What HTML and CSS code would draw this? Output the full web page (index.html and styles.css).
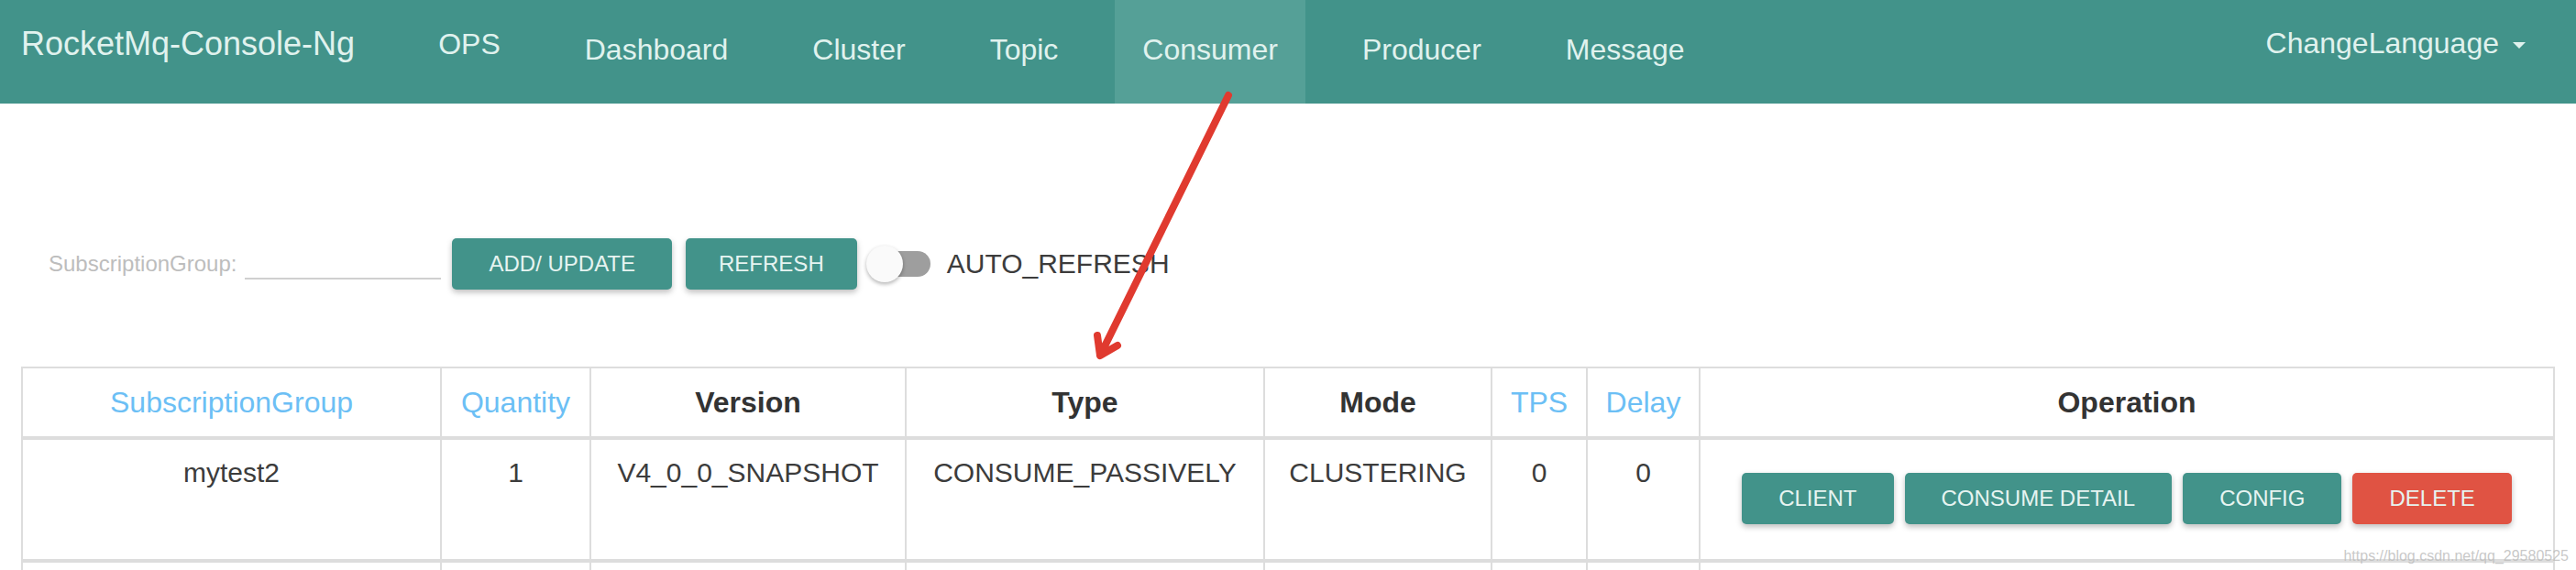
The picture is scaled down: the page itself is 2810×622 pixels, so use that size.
FILE: index.html
```html
<!DOCTYPE html>
<html lang="en">
<head>
  <meta charset="UTF-8">
  <title>RocketMq-Console-Ng</title>
  <link rel="stylesheet" href="styles.css">
</head>
<body>
  <nav class="navbar">
    <a class="brand" href="#">RocketMq-Console-Ng</a>
    <ul class="nav">
      <li><a class="nav-ops" href="#">OPS</a></li>
      <li><a href="#">Dashboard</a></li>
      <li><a href="#">Cluster</a></li>
      <li><a href="#">Topic</a></li>
      <li class="active"><a href="#">Consumer</a></li>
      <li><a href="#">Producer</a></li>
      <li><a href="#">Message</a></li>
    </ul>
    <div class="lang">ChangeLanguage <span class="caret"></span></div>
  </nav>

  <div class="content">
    <div class="search">
      <label>SubscriptionGroup:</label>
      <input type="text">
      <button class="btn">Add/ Update</button>
      <button class="btn">Refresh</button>
      <div class="switch"><span class="track"></span><span class="knob"></span></div>
      <span class="switch-label">AUTO_REFRESH</span>
    </div>

    <table class="grid">
      <colgroup>
        <col style="width:457px"><col style="width:163px"><col style="width:344px"><col style="width:391px">
        <col style="width:248px"><col style="width:104px"><col style="width:123px"><col style="width:932px">
      </colgroup>
      <thead>
        <tr>
          <th class="sort">SubscriptionGroup</th>
          <th class="sort">Quantity</th>
          <th>Version</th>
          <th>Type</th>
          <th>Mode</th>
          <th class="sort">TPS</th>
          <th class="sort">Delay</th>
          <th>Operation</th>
        </tr>
      </thead>
      <tbody>
        <tr>
          <td>mytest2</td>
          <td>1</td>
          <td>V4_0_0_SNAPSHOT</td>
          <td>CONSUME_PASSIVELY</td>
          <td>CLUSTERING</td>
          <td>0</td>
          <td>0</td>
          <td>
            <div class="row-actions">
              <button class="btn">Client</button>
              <button class="btn">Consume Detail</button>
              <button class="btn">Config</button>
              <button class="btn danger">Delete</button>
            </div>
          </td>
        </tr>
        <tr class="next">
          <td></td><td></td><td></td><td></td><td></td><td></td><td></td><td></td>
        </tr>
      </tbody>
    </table>
  </div>

  <svg class="arrow" width="2810" height="622" viewBox="0 0 2810 622">
    <path d="M1340 104 L1201 386 M1200 388 L1197 366 M1200 388 L1219 377" />
  </svg>
  <div class="watermark">https://blog.csdn.net/qq_29580525</div>
</body>
</html>
```

FILE: styles.css
```css
body {
  margin: 0;
  font-family: "Liberation Sans", Arial, Helvetica, sans-serif;
  color: #333;
  background: #fff;
  overflow: hidden;
}
.navbar {
  display: flex;
  height: 113px;
  background: #42938a;
  color: #e0f2ee;
}
.brand {
  padding: 28px 0 0 23px;
  margin-right: 61px;
  font-size: 36px;
  line-height: 40px;
  color: inherit;
  text-decoration: none;
}
.nav {
  display: flex;
  gap: 32px;
  list-style: none;
  margin: 0;
  padding: 0;
}
.nav a {
  display: block;
  height: 113px;
  box-sizing: border-box;
  padding: 34px 30px 0;
  font-size: 32px;
  line-height: 40px;
  color: inherit;
  text-decoration: none;
}
.nav a.nav-ops {
  padding-top: 28px;
}
.nav .active a {
  background: #55a097;
}
.lang {
  display: flex;
  align-items: flex-start;
  margin-left: auto;
  padding: 27px 55px 0 0;
  font-size: 32px;
  line-height: 40px;
}
.caret {
  width: 0;
  height: 0;
  margin: 19px 0 0 15px;
  border-top: 7px solid;
  border-left: 7px solid transparent;
  border-right: 7px solid transparent;
}
.content {
  padding: 147px 25px 0 23px;
}
.search {
  display: flex;
  align-items: center;
  height: 56px;
  padding-left: 30px;
}
.search label {
  margin-right: 9px;
  font-size: 24px;
  color: #bdbdbd;
}
.search input {
  width: 214px;
  height: 34px;
  box-sizing: border-box;
  margin: 0 12px 0 0;
  border: none;
  border-bottom: 2px solid #d0d0d0;
  background: transparent;
  outline: none;
}
.btn {
  height: 56px;
  padding: 0 40px;
  border: none;
  border-radius: 5px;
  background: #42938a;
  color: #e6f4f1;
  font-family: inherit;
  font-size: 24px;
  text-transform: uppercase;
  box-shadow: 0 3px 6px rgba(0, 0, 0, 0.26);
}
.btn.danger {
  background: #e05343;
}
.search .btn + .btn {
  margin-left: 15px;
  padding: 0 36px;
}
.switch {
  position: relative;
  width: 70px;
  height: 40px;
  margin-left: 10px;
}
.switch .track {
  position: absolute;
  left: 4px;
  top: 6px;
  width: 66px;
  height: 28px;
  border-radius: 14px;
  background: #9e9e9e;
}
.switch .knob {
  position: absolute;
  left: 0;
  top: 0;
  width: 40px;
  height: 40px;
  border-radius: 50%;
  background: #fafafa;
  box-shadow: 0 2px 4px rgba(0, 0, 0, 0.3);
}
.switch-label {
  margin-left: 18px;
  font-size: 30px;
  color: #3c3c3c;
}
.grid {
  width: 2762px;
  margin-top: 84px;
  border-collapse: collapse;
  table-layout: fixed;
}
.grid th,
.grid td {
  border: 2px solid #ddd;
  text-align: center;
}
.grid th {
  padding: 17px 6px;
  border-bottom-width: 4px;
  font-size: 32px;
  line-height: 40px;
  font-weight: bold;
}
.grid th.sort {
  color: #6cbff5;
  font-weight: normal;
}
.grid td {
  padding: 16px 6px;
  vertical-align: top;
  font-size: 30px;
  line-height: 40px;
  color: #3c3c3c;
  white-space: nowrap;
}
.grid tbody tr {
  border-bottom: 4px solid #ddd;
}
.grid tr.next td {
  height: 100px;
}
.row-actions {
  display: flex;
  justify-content: center;
  gap: 12px;
  margin: 20px 0 22px;
}
.arrow {
  position: absolute;
  left: 0;
  top: 0;
  pointer-events: none;
}
.arrow path {
  fill: none;
  stroke: #e03a2f;
  stroke-width: 8;
  stroke-linecap: round;
  stroke-linejoin: round;
}
.watermark {
  position: absolute;
  right: 8px;
  top: 598px;
  font-size: 16px;
  color: rgba(190, 190, 190, 0.85);
}
```
